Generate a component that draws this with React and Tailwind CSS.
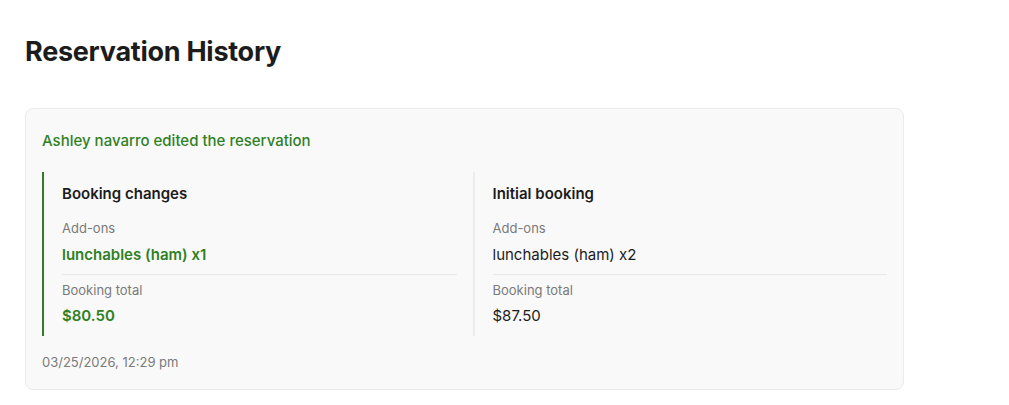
const changes = {
  title: 'Booking changes',
  addons: 'lunchables (ham) x1',
  total: '$80.50',
};

const initial = {
  title: 'Initial booking',
  addons: 'lunchables (ham) x2',
  total: '$87.50',
};

function Column({ data, highlight }) {
  const value = highlight ? 'text-[#2f8024] font-semibold' : 'text-[#1c1c1c]';
  return (
    <div className={`border-l-2 pl-[18px] pt-[12px] pb-[10px] ${highlight ? 'border-[#2f7d24]' : 'border-[#ececec]'}`}>
      <h3 className="text-[15px] leading-[20px] font-semibold text-[#1c1c1c]">{data.title}</h3>
      <div className="mt-[15px] pb-[9px] border-b border-[#e8e8e8]">
        <p className="text-[13px] leading-[18px] text-[#7a7a7a]">Add-ons</p>
        <p className={`mt-[8px] text-[15px] leading-[20px] ${value}`}>{data.addons}</p>
      </div>
      <div className="pt-[6px]">
        <p className="text-[13px] leading-[18px] text-[#7a7a7a]">Booking total</p>
        <p className={`mt-[7px] text-[15px] leading-[20px] ${value}`}>{data.total}</p>
      </div>
    </div>
  );
}

export default function App() {
  return (
    <div className="min-h-[405px] bg-white px-[25px] pt-[34px] font-['Inter',sans-serif]">
      <h1 className="text-[27px] leading-[36px] font-bold text-[#1c1c1c] tracking-[-0.01em]">Reservation History</h1>

      <div className="mt-[38px] w-[879px] rounded-lg border border-[#ebebeb] bg-[#f9f9f9] px-4 pt-[22px] pb-[18px]">
        <p className="text-[15px] leading-[20px] font-medium text-[#2f8024]">Ashley navarro edited the reservation</p>

        <div className="mt-[21px] grid grid-cols-2 gap-4">
          <Column data={changes} highlight />
          <Column data={initial} />
        </div>

        <p className="mt-[17px] text-[13px] leading-[18px] text-[#7a7a7a]">03/25/2026, 12:29 pm</p>
      </div>
    </div>
  );
}
